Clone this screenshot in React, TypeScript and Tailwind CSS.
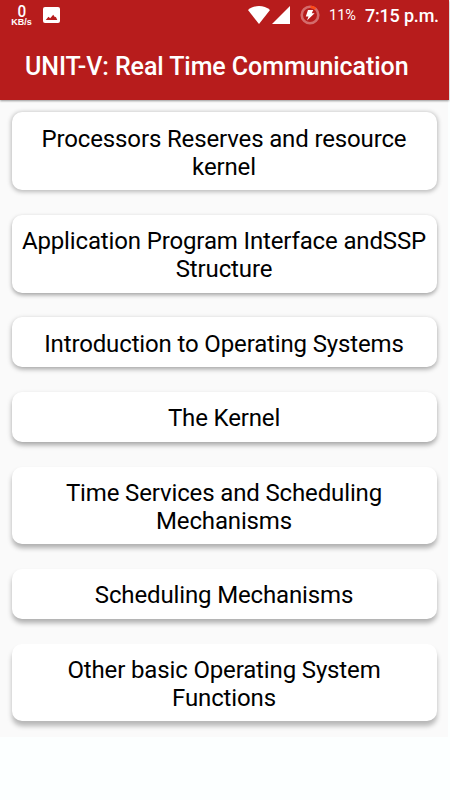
import React from "react";
import clsx from "clsx";

interface Topic {
    title: string
    lines: string[]
    shadow: string
}

// Elevation light comes from the top, so the shadow grows down the list
const topics: Topic[] = [
    { title: "reserves", lines: ["Processors Reserves and resource", "kernel"], shadow: "shadow-[0_1px_4px_1px_rgba(0,0,0,0.25)]" },
    { title: "api", lines: ["Application Program Interface andSSP", "Structure"], shadow: "shadow-[0_2px_4px_0px_rgba(0,0,0,0.36)]" },
    { title: "intro", lines: ["Introduction to Operating Systems"], shadow: "shadow-[0_2px_5px_0px_rgba(0,0,0,0.36)]" },
    { title: "kernel", lines: ["The Kernel"], shadow: "shadow-[0_3px_5px_0px_rgba(0,0,0,0.34)]" },
    { title: "time", lines: ["Time Services and Scheduling", "Mechanisms"], shadow: "shadow-[0_4px_5px_0px_rgba(0,0,0,0.3)]" },
    { title: "scheduling", lines: ["Scheduling Mechanisms"], shadow: "shadow-[0_4px_5px_0px_rgba(0,0,0,0.3)]" },
    { title: "other", lines: ["Other basic Operating System", "Functions"], shadow: "shadow-[0_5px_5px_0px_rgba(0,0,0,0.27)]" },
];

const StatusBar: React.FC = () => {
    return (
        <div className="flex h-8 items-start text-white" >
            <div className="ml-[10px] mt-[3px] flex w-[23px] flex-col items-center" >
                <span className="h-[15px] scale-x-90 text-[17px] font-medium leading-[16px]" >0</span>
                <span className="h-[8px] font-['Liberation_Sans'] text-[9px] font-bold leading-[9px]" >KB/s</span>
            </div>
            <svg className="ml-[10px] mt-[7px]" width="17" height="16" viewBox="0 0 17 16" >
                <rect width="17" height="16" rx="2" fill="white" />
                <path d="M2.8 13 L5.4 9.7 L7.2 11.3 L10.2 7.8 L12 10.2 L12.8 9.8 L14.3 13 Z" fill="#b71c1c" />
            </svg>
            <div className="flex-1" />
            <svg className="mt-[6px]" width="22" height="18" viewBox="0 0 22 18" >
                <path d="M0 4 C6 -1.2 16 -1.2 22 4 L11 18 Z" fill="white" />
            </svg>
            <svg className="ml-[2px] mt-[6px]" width="18" height="18" viewBox="0 0 18 18" >
                <path d="M18 0 V18 H0 Z" fill="white" />
            </svg>
            <svg className="ml-[10px] mt-[5px]" width="20" height="20" viewBox="0 0 20 20" >
                <circle cx="10" cy="10" r="8.3" fill="none" stroke="#d46c6c" strokeWidth="2.6" />
                <path d="M10.5 1.7 A8.3 8.3 0 0 1 15.5 3.7" fill="none" stroke="#ff4a16" strokeWidth="2.6" />
                <path d="M8 5 H13.2 L11.8 8.2 H14.6 L7 15.4 L8.5 11.4 H5.8 Z" fill="white" />
            </svg>
            <span className="ml-[9px] mr-[-1px] mt-[6px] w-[28px] whitespace-nowrap text-[14.5px] leading-[20px]" >11%</span>
            <span className="ml-[9px] mr-[10px] mt-[5px] w-[74px] whitespace-nowrap text-[18px] font-medium leading-[21px] tracking-[-0.2px]" >7:15 p.m.</span>
        </div>
    )
}

const TopicCard: React.FC<{ topic: Topic }> = ({ topic }) => {
    return (
        <button className={clsx("w-full rounded-[10px] bg-white pb-[9.6px] pt-[12.2px] text-center text-[24px] leading-[28px] tracking-[-0.14px] text-black", topic.shadow)} >
            {topic.lines.map((line) => (
                <span key={line} className="block whitespace-nowrap" >{line}</span>
            ))}
        </button>
    )
}

const App: React.FC = () => {
    return (
        <div className="h-[800px] w-[450px] overflow-hidden bg-[#fcffff] font-['Roboto',sans-serif]" >
            <div className="h-[737px] w-[448px] bg-[#fafafa]" >
                <header className="h-[100px] w-[449px] bg-[#b71c1c] shadow-[0_1px_2px_rgba(0,0,0,0.4)]" >
                    <StatusBar />
                    <h1 className="ml-[25px] mt-[21px] whitespace-nowrap text-[25px] font-medium leading-[28px] tracking-[-0.07px] text-white" >
                        UNIT-V: Real Time Communication
                    </h1>
                </header>
                <main className="flex flex-col gap-[24.75px] pl-[11.5px] pr-[11.5px] pt-[12.4px]" >
                    {topics.map((topic) => (
                        <TopicCard key={topic.title} topic={topic} />
                    ))}
                </main>
            </div>
        </div>
    )
}

export default App;
